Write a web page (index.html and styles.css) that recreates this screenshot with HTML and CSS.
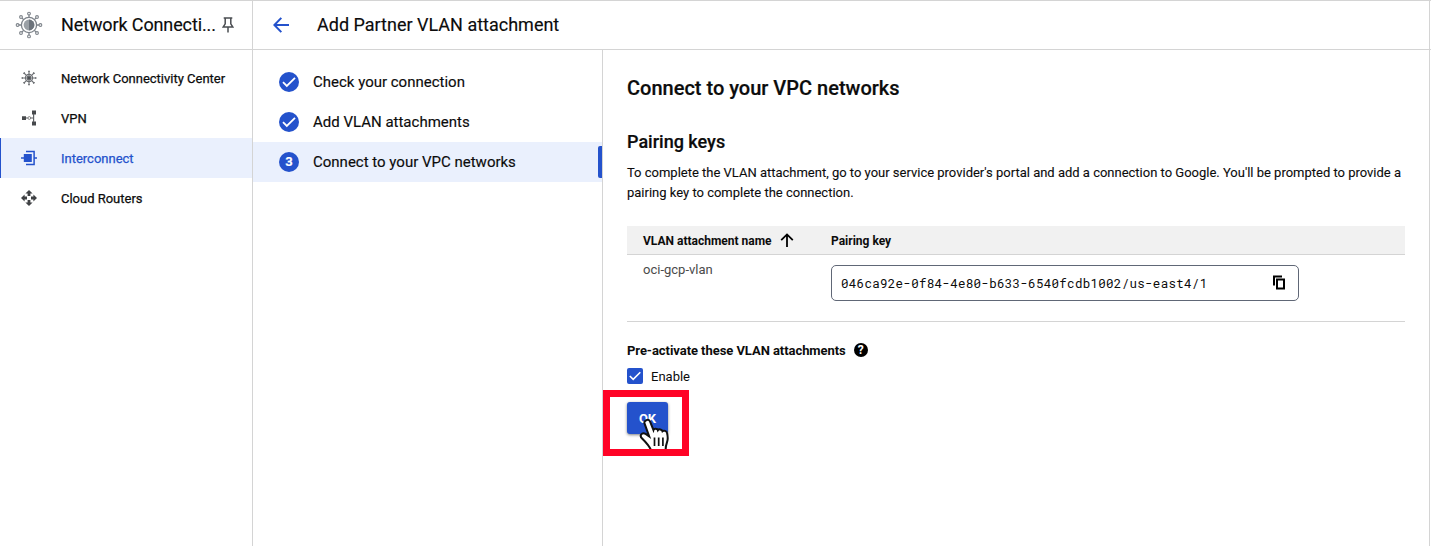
FILE: index.html
```html
<!DOCTYPE html>
<html lang="en">
<head>
<meta charset="utf-8">
<title>Add Partner VLAN attachment</title>
<link rel="stylesheet" href="styles.css">
</head>
<body>
<div class="app">
  <header class="topbar">
    <div class="product">
      <svg class="product-icon" width="28" height="28" viewBox="0 0 28 28" fill="none" stroke="#7d838a" stroke-width="1.3">
        <circle cx="14" cy="14" r="7.6"/>
        <circle cx="14" cy="14" r="5.4" fill="#9aa0a6" stroke="none"/>
        <path d="M14 8.6a5.4 5.4 0 0 1 0 10.8z" fill="#6c737b" stroke="none"/>
        <path d="M14 6.4V3.8M14 21.6v2.6M6.4 14H3.8M21.6 14h2.6M8.6 8.6 6.9 6.9M19.4 8.6l1.7-1.7M8.6 19.4l-1.7 1.7M19.4 19.4l1.7 1.7"/>
        <g stroke-width="1.1"><circle cx="14" cy="2.6" r="1.4"/><circle cx="14" cy="25.4" r="1.4"/><circle cx="2.6" cy="14" r="1.4"/><circle cx="25.4" cy="14" r="1.4"/><circle cx="6" cy="6" r="1.4"/><circle cx="22" cy="6" r="1.4"/><circle cx="6" cy="22" r="1.4"/><circle cx="22" cy="22" r="1.4"/></g>
      </svg>
      <span class="product-name">Network Connecti...</span>
      <svg class="pin" width="12" height="16" viewBox="0 0 12 16" fill="none" stroke="#4a4d51" stroke-width="1.5"><path d="M1.7 .9h8.6M3.2 1v5.8L1.3 9.9h9.4L8.8 6.8V1M6 10v5.6"/></svg>
    </div>
    <div class="page-head">
      <svg width="16" height="16" viewBox="0 0 16 16" fill="none" stroke="#2452cc" stroke-width="2"><path d="M8.3.9 1.4 8l6.9 7.1M1.5 8H16"/></svg>
      <h1 class="page-title">Add Partner VLAN attachment</h1>
    </div>
  </header>
  <div class="body">
    <nav class="sidebar">
      <a class="nav-item">
        <svg width="16" height="16" viewBox="0 0 16 16" fill="none" stroke="#6b6e72" stroke-width="1.1"><circle cx="8" cy="8" r="3.6"/><circle cx="8" cy="8" r="2.1" fill="#4b4e52"/><path d="M8 4.4V1M8 11.6V15M4.4 8H1M11.6 8H15M5.4 5.4 3 3M10.6 5.4 13 3M5.4 10.6 3 13M10.6 10.6 13 13"/><path d="M7 1.2h2M7 14.8h2M1.2 7v2M14.8 7v2M2.3 3.7l1.4-1.4M12.3 2.3l1.4 1.4M2.3 12.3l1.4 1.4M12.3 13.7l1.4-1.4"/></svg>
        <span>Network Connectivity Center</span>
      </a>
      <a class="nav-item">
        <svg width="16" height="16" viewBox="0 0 16 16"><path d="M1 6.2h4V10H1zM11 .5h4v4h-4zM11 11.5h4v4h-4z" fill="#47494c"/><path d="M5 8h1.8M9.7 8h2.5M12.6 4v8" fill="none" stroke="#5f6266" stroke-width="1.2"/><circle cx="8.3" cy="8" r="1.4" fill="none" stroke="#777" stroke-width=".9"/></svg>
        <span>VPN</span>
      </a>
      <a class="nav-item active">
        <svg width="16" height="16" viewBox="0 0 16 16" fill="#2452cc"><path d="M2.8 3.9h8v8.2h-8zM0 7.2h3v1.6H0zM13 7.2h3v1.6h-3z"/><path d="M5 1.5h8.1v13H5" fill="none" stroke="#2452cc" stroke-width="1.5"/></svg>
        <span>Interconnect</span>
      </a>
      <a class="nav-item">
        <svg width="16" height="16" viewBox="0 0 16 16" fill="#3f4144"><path d="M8 0l3.6 3.6H9.4V6H6.6V3.6H4.4zM8 16l3.6-3.6H9.4V10H6.6v2.4H4.4zM0 8l3.6-3.6v2.2H6v2.8H3.6v2.2zM16 8l-3.6-3.6v2.2H10v2.8h2.4v2.2z"/></svg>
        <span>Cloud Routers</span>
      </a>
    </nav>
    <div class="steps">
      <div class="step">
        <span class="badge"><svg width="14" height="12" viewBox="0 0 14 12" fill="none" stroke="#fff" stroke-width="1.8"><path d="M1 6.2 4.8 10 13 1.8"/></svg></span>
        <span>Check your connection</span>
      </div>
      <div class="step">
        <span class="badge"><svg width="14" height="12" viewBox="0 0 14 12" fill="none" stroke="#fff" stroke-width="1.8"><path d="M1 6.2 4.8 10 13 1.8"/></svg></span>
        <span>Add VLAN attachments</span>
      </div>
      <div class="step current">
        <span class="badge">3</span>
        <span>Connect to your VPC networks</span>
      </div>
    </div>
    <main class="content">
      <h2 class="section-title">Connect to your VPC networks</h2>
      <h3 class="sub-title">Pairing keys</h3>
      <p class="desc">To complete the VLAN attachment, go to your service provider's portal and add a connection to Google. You'll be prompted to provide a<br>pairing key to complete the connection.</p>
      <div class="table">
        <div class="row head">
          <div class="cell name"><span class="label">VLAN attachment name</span>
            <svg width="14" height="14" viewBox="0 0 14 14" fill="none" stroke="#000" stroke-width="1.8"><path d="M7 14V1.6M1.2 7.2 7 1.4l5.8 5.8"/></svg>
          </div>
          <div class="cell label">Pairing key</div>
        </div>
        <div class="row data">
          <div class="cell name attachment">oci-gcp-vlan</div>
          <div class="key-box"><span>046ca92e-0f84-4e80-b633-6540fcdb1002/us-east4/1</span>
            <svg width="14" height="15" viewBox="0 0 14 15" fill="none" stroke="#000" stroke-width="2"><path d="M2 10.5V1.5H10M5 4.5h7v9H5z"/></svg>
          </div>
        </div>
      </div>
      <div class="pre">
        <span class="label">Pre-activate these VLAN attachments</span>
        <span class="help">?</span>
      </div>
      <label class="enable">
        <span class="checkbox"><svg width="12" height="10" viewBox="0 0 12 10" fill="none" stroke="#fff" stroke-width="1.6"><path d="M.8 5 4.2 8.4 11.3 1.3"/></svg></span>
        <span class="label">Enable</span>
      </label>
      <div class="action">
        <button class="ok">OK</button>
        <svg class="cursor" width="34" height="34" viewBox="0 0 34 34"><path d="M8.7 2c1.7-.6 2.900.3 3.500 1.900l3.200 8c.4-1.700 3.900-1.700 4.500.3.900-1.400 4-1 4.600 1 1.200-1 4.100-.4 4.500 1.500.8 3.300 1.200 6.200.1 9.200-.9 2.400-1.500 4.500-1.600 8.900H13.500c-1.600-3.500-5.400-8.400-9.400-12.300-3.100-3-.3-6.600 3.500-4.600l3.600 2.500L6.500 5.300c-.5-1.400.6-2.800 2.200-3.300z" fill="#fff" stroke="#111" stroke-width="2"/><path d="M16.500 19.500v8.500M20.700 19.500v8.500M24.900 19.500v8.500" stroke="#111" stroke-width="1.700"/></svg>
        <span class="highlight"></span>
      </div>
    </main>
  </div>
</div>
</body>
</html>
```
FILE: styles.css
```css
* { box-sizing: border-box; }
body { margin: 0; background: #fff; color: #0c0c0c; font: 400 13px/20px Roboto, "Liberation Sans", sans-serif; overflow: hidden; }
h1, h2, h3, p { margin: 0; }
svg { display: block; flex: none; }
span { white-space: nowrap; }
.app { height: 546px; display: flex; flex-direction: column; }
.topbar { height: 50px; flex: none; display: flex; border-top: 1px solid #d4d4d4; border-bottom: 1px solid #d4d4d4; }
.product { width: 253px; flex: none; display: flex; align-items: center; padding-left: 15px; border-right: 1px solid #d4d4d4; }
.product-name { margin-left: 18px; width: 161px; font-size: 18px; letter-spacing: -.12px; -webkit-text-stroke: .15px; }
.page-head { flex: 1; margin-right: 1px; display: flex; align-items: center; padding-left: 20px; gap: 28px; border-right: 1px solid #d4d4d4; }
.page-title { font-size: 18px; font-weight: 400; -webkit-text-stroke: .15px; }
.body { flex: 1; display: flex; margin-right: 1px; border-right: 1px solid #d4d4d4; }
.sidebar { width: 253px; flex: none; padding-top: 8px; border-right: 1px solid #d4d4d4; }
.nav-item { height: 40px; display: flex; align-items: center; gap: 24px; padding-left: 21px; letter-spacing: -.01px; -webkit-text-stroke: .25px; }
.nav-item span { padding-top: 1px; }
.active { background: #eaf0fd; color: #2452cc; box-shadow: inset 1px 0 #2452cc; }
.steps { width: 350px; flex: none; padding-top: 12px; border-right: 1px solid #d4d4d4; }
.step { height: 40px; display: flex; align-items: center; gap: 14px; padding-left: 26px; font-size: 15px; -webkit-text-stroke: .15px; }
.badge { width: 20px; height: 20px; border-radius: 50%; background: #2452cc; color: #fff; display: flex; align-items: center; justify-content: center; font-size: 13px; font-weight: 700; }
.current { position: relative; background: #eaf0fd; }
.current::after { content: ""; position: absolute; right: 0; top: 4px; width: 4px; height: 32px; background: #2452cc; border-radius: 2px 0 0 2px; }
.content { flex: 1; padding: 26px 24px 0; }
.section-title { font-size: 20px; line-height: 24px; font-weight: 500; -webkit-text-stroke: .2px; }
.sub-title { margin-top: 30px; font-size: 18px; line-height: 24px; font-weight: 500; -webkit-text-stroke: .2px; }
.desc { margin-top: 9px; letter-spacing: -.006px; white-space: nowrap; -webkit-text-stroke: .1px; }
.table { margin-top: 23px; width: 778px; }
.row { display: flex; padding-left: 16px; }
.head { height: 29px; align-items: center; background: #f1f1f1; border-bottom: 1px solid #d4d4d4; font-size: 12px; font-weight: 700; }
.label { padding-top: 1px; }
.name { width: 188px; display: flex; align-items: center; gap: 8px; }
.data { height: 67px; align-items: flex-start; padding-top: 10px; border-bottom: 1px solid #d4d4d4; }
.attachment { margin-top: -5px; color: #4a4a4a; }
.key-box { width: 468px; height: 36px; border: 1px solid #606776; border-radius: 5px; display: flex; align-items: center; justify-content: space-between; padding: 0 12px 0 9px; font: 400 12.5px/20px "Roboto Mono", "DejaVu Sans Mono", monospace; letter-spacing: .295px; }
.key-box svg { margin-bottom: 1px; }
.pre { margin-top: 18px; height: 20px; display: flex; align-items: center; gap: 8px; font-weight: 700; letter-spacing: -.055px; }
.help { width: 14px; height: 14px; border-radius: 50%; background: #000; color: #fff; font-size: 12px; line-height: 15px; text-align: center; }
.enable { margin-top: 6px; height: 20px; display: flex; align-items: center; gap: 8px; }
.checkbox { width: 16px; height: 16px; border-radius: 2px; background: #2452cc; display: flex; align-items: center; justify-content: center; }
.action { position: relative; margin-top: 16px; width: 41px; height: 32px; }
.ok { display: block; width: 41px; height: 32px; padding: 0; border: 0; border-radius: 3px; background: #2452cc; color: #fff; font: 700 13px/33px Roboto, sans-serif; box-shadow: 0 1px 3px rgba(0,0,0,.5); }
.cursor { position: absolute; left: 11px; top: 16px; }
.highlight { position: absolute; left: -24px; top: -12px; width: 86px; height: 66px; border: 7px solid #ff0326; }
```
